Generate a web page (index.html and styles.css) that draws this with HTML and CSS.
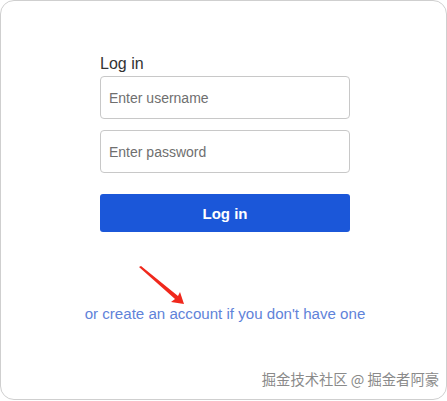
FILE: index.html
```html
<!DOCTYPE html>
<html lang="en">

<head>
  <meta charset="UTF-8">
  <meta name="viewport" content="width=device-width, initial-scale=1.0">
  <title>Log in</title>
  <link rel="stylesheet" href="styles.css">
</head>

<body>
  <div class="card">
    <form class="login-form">
      <label class="form-title" for="username">Log in</label>
      <input class="field" id="username" type="text" placeholder="Enter username">
      <input class="field" id="password" type="password" placeholder="Enter password">
      <button class="btn" type="button">Log in</button>
    </form>

    <a class="signup-link" href="#">or create an account if you don't have one</a>

    <svg class="arrow" width="60" height="50" viewBox="0 0 60 50">
      <polygon points="1,1 3,0 40,30 42,26 46,38 33,36 37,33" fill="#f0281c" />
    </svg>

    <div class="watermark">掘金技术社区 @ 掘金者阿豪</div>
  </div>
</body>

</html>
```

FILE: styles.css
```css
* {
  margin: 0;
  padding: 0;
  box-sizing: border-box;
}

body {
  font-family: 'Liberation Sans', Arial, sans-serif;
  background-color: #fff;
  color: #333;
}

.card {
  position: relative;
  width: 447px;
  height: 400px;
  border: 1px solid #cfcfcf;
  border-radius: 14px;
  padding-top: 52px;
  display: flex;
  flex-direction: column;
  align-items: center;
}

.login-form {
  width: 250px;
  margin-left: 3px;
  display: flex;
  flex-direction: column;
}

.form-title {
  font-size: 16px;
  line-height: 22px;
  color: #333;
  margin-bottom: 1px;
}

.field {
  height: 43px;
  border: 1px solid #c8c8c8;
  border-radius: 4px;
  padding: 0 8px;
  font-family: 'Liberation Sans', Arial, sans-serif;
  font-size: 14px;
  color: #333;
  margin-bottom: 11px;
  outline: none;
}

.field::placeholder {
  color: #6f6f6f;
}

.btn {
  margin-top: 10px;
  height: 38px;
  border: none;
  border-radius: 3px;
  background-color: #1b57d9;
  color: #fff;
  font-family: 'Liberation Sans', Arial, sans-serif;
  font-size: 15px;
  font-weight: bold;
  cursor: pointer;
}

.signup-link {
  margin-top: 73px;
  margin-left: 3px;
  font-size: 15.1px;
  color: #5f83d9;
  text-decoration: none;
}

.arrow {
  position: absolute;
  left: 137px;
  top: 265px;
}

.watermark {
  position: absolute;
  right: 7px;
  bottom: 10px;
  font-family: 'Noto Sans CJK SC', sans-serif;
  font-size: 14.3px;
  color: #8a8a8a;
  text-shadow: 0 0 1px #fff;
}
```
